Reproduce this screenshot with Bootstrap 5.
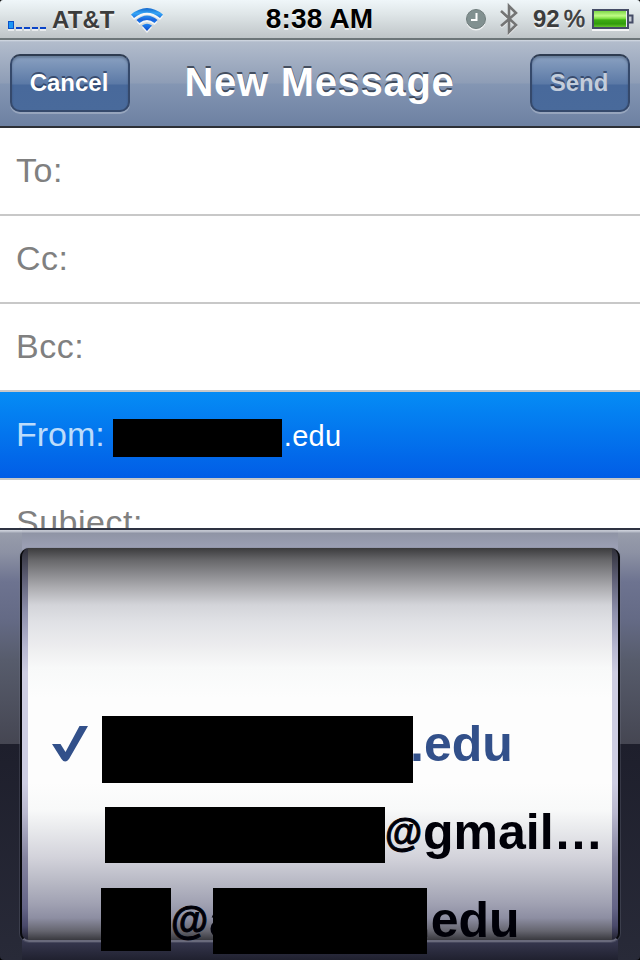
<!DOCTYPE html>
<html lang="en">
<head>
    <meta charset="UTF-8" />
    <meta name="viewport" content="width=device-width, initial-scale=1.0"/>
    <title>New Message</title>
    <link href="https://cdn.jsdelivr.net/npm/bootstrap@5.3.0/dist/css/bootstrap.min.css" rel="stylesheet">
    <style>
        body {
          font-family: "Liberation Sans", Arial, sans-serif;
          background-color: #000;
        }
        .phone {
          width: 640px;
          height: 960px;
        }

        /* status bar */
        .status-bar {
          height: 40px;
          padding-left: 8px;
          padding-right: 6px;
          background: linear-gradient(#eff6f9 0, #dfe6e8 14px, #bfc5c8 38px, #6d7679 38px, #6d7679 40px);
          border-radius: 3px 3px 0 0;
          font-size: 24px;
          font-weight: bold;
          line-height: 38px;
          color: #3c3c3c;
          text-shadow: 0 2px 0 rgba(255,255,255,0.7);
        }
        .status-side { width: 240px; height: 38px; }
        .carrier { margin-left: 5px; padding-top: 1px; letter-spacing: 0.1px; }
        .clock { font-size: 28px; color: #000; letter-spacing: 0.2px; height: 38px; margin-left: -3px; }
        .percent-sign { margin-left: 4px; font-weight: normal; -webkit-text-stroke: 0.6px #3c3c3c; }

        /* title bar */
        .title-bar {
          height: 88px;
          padding: 0 10px;
          background: linear-gradient(#d5dbe4 0, #b2bccc 2px, #8e9db6 43px, #8496b3 44px, #6d81a2 100%);
          border-bottom: 2px solid #2d3036;
        }
        .title-bar h1 {
          font-size: 40px;
          font-weight: bold;
          letter-spacing: 0.7px;
          padding-bottom: 3px;
          margin-left: -21px;
          color: #fff;
          text-shadow: 0 -2px 0 rgba(40,50,65,0.75);
        }
        .bar-btn {
          height: 58px;
          width: 120px;
          padding: 0 2px 0 0;
          border: 2px solid #35496b;
          border-top-color: #2e3b50;
          border-radius: 10px;
          background: linear-gradient(#8aa1c1 0, #5b79a6 28px, #48699b 29px, #496a9b 100%);
          box-shadow: 0 2px 0 rgba(255,255,255,0.25), inset 0 2px 2px rgba(30,45,70,0.3);
          font-size: 24px;
          font-weight: bold;
          color: #fff;
          text-shadow: 0 -2px 0 rgba(30,45,75,0.65);
        }
        .bar-btn.send { width: 100px; color: #c3cddb; }

        /* header fields */
        .fields { height: 400px; }
        .field {
          flex: 0 0 88px;
          padding: 0 16px 2px;
          border-bottom: 2px solid #c8c8c8;
          font-size: 34px;
          letter-spacing: 0.5px;
          color: #808080;
        }
        .field.selected {
          background: linear-gradient(#058cf5, #015de6);
          letter-spacing: 0;
          color: #bcdcfb;
        }
        .field .address { font-size: 29px; letter-spacing: 0.3px; color: #fff; margin-left: 2px; padding-top: 5px; }

        /* account picker */
        .picker {
          height: 432px;
          padding: 0 20px;
          border-top: 2px solid #2e3342;
          background: linear-gradient(#d0d4dd 0, #b5bac6 2px, #979cab 3px, #8d92a4 22px, #6d7390 52px, #646a85 90px, #575c6c 130px, #454652 214px, #1e1f2c 214px, #282a38 100%);
          border-radius: 0 0 4px 4px;
        }
        .wheel-column {
          margin: 0 2px;
          height: 430px;
          padding-top: 18px;
          background: linear-gradient(#c5c9d3 0, #b5b9c6 2px, #8f94a5 3px, #9ca0b5 18px, #42435c 380px, #34354c 413px, #20212f 430px);
        }
        .wheel {
          height: 394px;
          margin: 0 -2px;
          border: 2px solid #08090c;
          border-top-width: 0;
          border-bottom: 2px solid #696a7c;
          border-radius: 9px;
          padding: 0 6px;
          box-shadow: 0 0 0 1px rgba(125,127,145,0.25);
          background: linear-gradient(#30303a 0, #5d5e74 30px, #8f91ad 65px, #b7b8d0 100px, #cdcde1 125px, #cdcde1 235px, #bab9ce 265px, #85849f 310px, #646487 360px, #49496a 378px, #22222f 392px);
        }
        .wheel-face {
          height: 392px;
          padding-top: 152px;
          background: linear-gradient(#3b3b3d 0, #67676a 12px, #858589 24px, #adadb1 40px, #d3d4d9 57px, #e1e2e6 75px, #ececee 97px, #f8f9f9 120px, #fdfdfd 150px, #fdfdfd 235px, #f8f9f9 262px, #e8e9ec 282px, #d2d2da 310px, #b7b8c4 335px, #a1a2b3 355px, #8d8ea2 370px, #65656f 383px, #39393f 392px);
        }
        .account {
          height: 88px;
          font-size: 50px;
          font-weight: bold;
          line-height: 88px;
          color: #000008;
          white-space: nowrap;
        }
        .account.chosen { color: #32508a; }
        /* the at sign is drawn narrower than the letters round it */
        .account .at {
          width: 38px;
          font-size: 41px;
          transform: scaleX(0.93);
          transform-origin: 0 0;
          -webkit-text-stroke: 1px #000008;
        }
        .tick { margin: 26px 14px 0 24px; }

        /* blacked out names */
        .redacted { background: #000; flex: none; position: relative; z-index: 1; }
        .from-name { width: 169px; height: 38px; margin: 8px 0 0 8px; }
        .name-1 { width: 311px; height: 67px; margin-top: 16px; }
        .name-2 { width: 280px; height: 56px; margin: 19px 0 0 77px; }
        .name-3 { width: 70px; height: 63px; margin: 12px 0 0 73px; }
        .name-4 { width: 214px; height: 66px; margin: 12px 0 0 -24px; }
    </style>
</head>
<body>
<div class="phone d-flex flex-column overflow-hidden">
    <div class="status-bar d-flex justify-content-between">
        <div class="status-side d-flex">
            <svg width="39" height="38" viewBox="0 0 39 38">
                <path d="M0 30h6M8 30h6M16 30h6M24 30h6M32 30h6" stroke="#fff" stroke-width="2" opacity=".6"/>
                <rect x=".5" y="21.5" width="5" height="7" fill="#1d97f5" stroke="#0a50c8"/>
                <path d="M8 28h6M16 28h6M24 28h6M32 28h6" stroke="#0a45c8" stroke-width="2"/>
            </svg>
            <span class="carrier">AT&amp;T</span>
            <svg class="ms-3" width="32" height="38" viewBox="0 0 32 38">
                <defs>
                    <linearGradient id="wave" x1="0" y1="8" x2="0" y2="32" gradientUnits="userSpaceOnUse">
                        <stop offset="0" stop-color="#1467cc"/>
                        <stop offset=".22" stop-color="#35a5f5"/>
                        <stop offset=".5" stop-color="#1762dc"/>
                        <stop offset=".65" stop-color="#2189f5"/>
                        <stop offset="1" stop-color="#0b3fc0"/>
                    </linearGradient>
                    <g id="waves">
                        <path d="M0 14.500Q16 1.500 32 14.500L29 18Q16 7.500 3 18Z"/>
                        <path d="M5.500 20Q16 11 26.500 20L23.500 23Q16 17 8.500 23Z"/>
                        <path d="M11 25.500Q16 22 21 25.500L16 31Z"/>
                    </g>
                </defs>
                <use href="#waves" y="2" fill="#fff" opacity=".75"/>
                <use href="#waves" fill="url(#wave)"/>
            </svg>
        </div>
        <div class="clock">8:38 AM</div>
        <div class="status-side d-flex justify-content-end">
            <svg width="20" height="38" viewBox="0 0 20 38">
                <circle cx="10" cy="21" r="9.500" fill="#fff" opacity=".7"/>
                <circle cx="10" cy="19" r="9.500" fill="#819090" stroke="#6f7c7c"/>
                <path d="M10.500 13v7H5" fill="none" stroke="#fff" stroke-width="2"/>
            </svg>
            <svg width="18" height="38" viewBox="0 0 18 38" style="margin-left: 14px">
                <path d="M1 12l15 14-7 7V7l7 6L1 27" fill="none" stroke="#fff" stroke-width="2.600" opacity=".7"/>
                <path d="M1 11l15 14-7 7V6l7 7L1 26" fill="none" stroke="#747575" stroke-width="2.600"/>
            </svg>
            <span style="margin-left: 15px">92</span>
            <span class="percent-sign">%</span>
            <svg width="42" height="38" viewBox="0 0 42 38" style="margin-left: 7px">
                <defs>
                    <linearGradient id="charge" x1="0" y1="0" x2="0" y2="1">
                        <stop offset="0" stop-color="#7fd84a"/>
                        <stop offset=".3" stop-color="#c0fb86"/>
                        <stop offset=".5" stop-color="#73d935"/>
                        <stop offset=".55" stop-color="#3fae13"/>
                        <stop offset=".8" stop-color="#319b0c"/>
                        <stop offset="1" stop-color="#65c52c"/>
                    </linearGradient>
                </defs>
                <path d="M0 30h37" stroke="#fff" stroke-width="2" opacity=".8"/>
                <rect x="1" y="10" width="35" height="18" fill="#e9edf2" stroke="#454c66" stroke-width="2"/>
                <rect x="2" y="11" width="32" height="16" fill="url(#charge)"/>
                <path d="M37 15.500h3.500v7H37" fill="#c7ccd5" stroke="#454c66" stroke-width="2"/>
            </svg>
        </div>
    </div>

    <div class="title-bar d-flex align-items-center justify-content-between">
        <button class="btn bar-btn">Cancel</button>
        <h1 class="mb-0">New Message</h1>
        <button class="btn bar-btn send">Send</button>
    </div>

    <div class="fields d-flex flex-column overflow-hidden bg-white">
        <div class="field d-flex align-items-center">To:</div>
        <div class="field d-flex align-items-center">Cc:</div>
        <div class="field d-flex align-items-center">Bcc:</div>
        <div class="field selected d-flex align-items-center">
            From:
            <span class="redacted from-name"></span>
            <span class="address">.edu</span>
        </div>
        <div class="field d-flex align-items-center">Subject:</div>
    </div>

    <div class="picker">
        <div class="wheel-column">
            <div class="wheel">
                <div class="wheel-face">
                    <div class="account chosen d-flex align-items-start">
                        <svg class="tick" width="36" height="36" viewBox="0 0 36 36">
                            <path d="M0 18H8.500L13.500 26L27.500 0H36L17 33Q13 38 9.500 33Z" fill="#32508a"/>
                        </svg>
                        <span class="redacted name-1"></span>
                        <span style="margin-left: -3px">.edu</span>
                    </div>
                    <div class="account d-flex align-items-start">
                        <span class="redacted name-2"></span>
                        <span class="at">@</span>
                        <span>gmail…</span>
                    </div>
                    <div class="account d-flex align-items-start">
                        <span class="redacted name-3"></span>
                        <span class="at">@</span>
                        <span>a</span>
                        <span class="redacted name-4"></span>
                        <span style="margin-left: -10px">.edu</span>
                    </div>
                </div>
            </div>
        </div>
    </div>
</div>
</body>
</html>
